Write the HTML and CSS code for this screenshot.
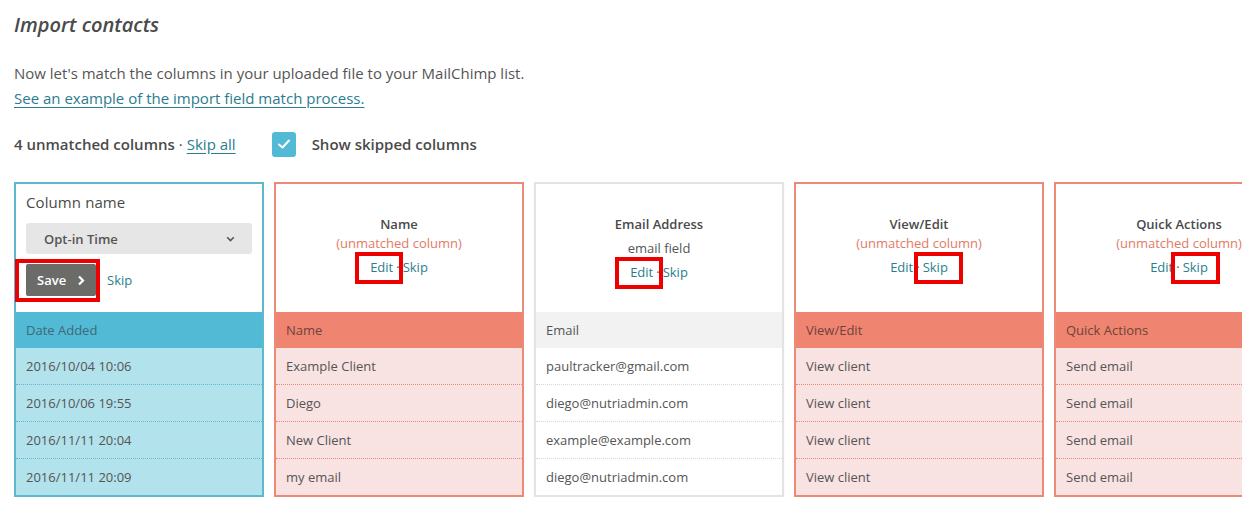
FILE: index.html
```html
<!DOCTYPE html>
<html>
<head>
<meta charset="utf-8">
<link rel="stylesheet" href="styles.css">
</head>
<body>
<div class="page">
  <h1 class="title">Import contacts</h1>
  <p class="intro">Now let's match the columns in your uploaded file to your MailChimp list.<br><a class="link" href="#">See an example of the import field match process.</a></p>
  <div class="toolbar">
    <span class="count">4 unmatched columns</span><span class="dot">·</span><a class="link" href="#">Skip all</a>
    <span class="checkbox"><svg width="14" height="12" viewBox="0 0 14 12"><path d="M2 6.5 L5.5 9.5 L12 2.5" fill="none" stroke="#fff" stroke-width="2" stroke-linecap="round" stroke-linejoin="round"/></svg></span>
    <span class="check-label">Show skipped columns</span>
  </div>

  <div class="columns">
    <div class="card card-blue">
      <div class="card-head head-edit">
        <div class="colname">Column name</div>
        <div class="select"><span>Opt-in Time</span><svg width="9" height="6" viewBox="0 0 9 6"><path d="M1.2 1.2 L4.5 4.5 L7.8 1.2" fill="none" stroke="#555" stroke-width="1.6"/></svg></div>
        <div class="save-row">
          <span class="save mark mark-save">Save<svg width="8" height="11" viewBox="0 0 8 11"><path d="M2 1.5 L6 5.5 L2 9.5" fill="none" stroke="#fff" stroke-width="2.2"/></svg></span>
          <a class="action" href="#">Skip</a>
        </div>
      </div>
      <div class="row row-head">Date Added</div>
      <div class="row">2016/10/04 10:06</div>
      <div class="row">2016/10/06 19:55</div>
      <div class="row">2016/11/11 20:04</div>
      <div class="row">2016/11/11 20:09</div>
    </div>

    <div class="card card-red">
      <div class="card-head">
        <div class="field">Name</div>
        <div class="unmatched">(unmatched column)</div>
        <div class="actions"><a class="action mark mark-left" href="#">Edit</a><span class="sep">·</span><a class="action" href="#">Skip</a></div>
      </div>
      <div class="row row-head">Name</div>
      <div class="row">Example Client</div>
      <div class="row">Diego</div>
      <div class="row">New Client</div>
      <div class="row">my email</div>
    </div>

    <div class="card card-gray">
      <div class="card-head">
        <div class="field">Email Address</div>
        <div class="matched">email field</div>
        <div class="actions actions-matched"><a class="action mark mark-left" href="#">Edit</a><span class="sep">·</span><a class="action" href="#">Skip</a></div>
      </div>
      <div class="row row-head">Email</div>
      <div class="row">paultracker@gmail.com</div>
      <div class="row">diego@nutriadmin.com</div>
      <div class="row">example@example.com</div>
      <div class="row">diego@nutriadmin.com</div>
    </div>

    <div class="card card-red">
      <div class="card-head">
        <div class="field">View/Edit</div>
        <div class="unmatched">(unmatched column)</div>
        <div class="actions"><a class="action" href="#">Edit</a><span class="sep">·</span><a class="action mark mark-right" href="#">Skip</a></div>
      </div>
      <div class="row row-head">View/Edit</div>
      <div class="row">View client</div>
      <div class="row">View client</div>
      <div class="row">View client</div>
      <div class="row">View client</div>
    </div>

    <div class="card card-red">
      <div class="card-head">
        <div class="field">Quick Actions</div>
        <div class="unmatched">(unmatched column)</div>
        <div class="actions"><a class="action" href="#">Edit</a><span class="sep">·</span><a class="action mark mark-mid" href="#">Skip</a></div>
      </div>
      <div class="row row-head">Quick Actions</div>
      <div class="row">Send email</div>
      <div class="row">Send email</div>
      <div class="row">Send email</div>
      <div class="row">Send email</div>
    </div>
  </div>
</div>
</body>
</html>
```

FILE: styles.css
```css
* { box-sizing: border-box; }
html, body { margin: 0; padding: 0; background: #fff; }
body { font-family: "Open Sans", "Liberation Sans", sans-serif; color: #555; }

.page { padding: 0 0 0 14px; }

.title {
  margin: 11px 0 0;
  font-size: 20px;
  line-height: 28px;
  font-style: italic;
  font-weight: 600;
  color: #4a4a4a;
}

.intro {
  margin: 22px 0 0;
  font-size: 15px;
  line-height: 25px;
  color: #555;
}

.link { color: #2a7d8e; text-decoration: underline; text-underline-offset: 3px; }

.toolbar {
  margin-top: 20px;
  height: 26px;
  display: flex;
  align-items: center;
  font-size: 15px;
  color: #4a4a4a;
}
.count { font-weight: 600; }
.dot { margin: 0 4px; }
.checkbox {
  margin-left: 36px;
  width: 24px;
  height: 25px;
  border-radius: 3px;
  background: #52bad5;
  display: flex;
  align-items: center;
  justify-content: center;
}
.check-label { margin-left: 16px; font-weight: 600; font-size: 15px; }

.columns {
  margin-top: 25px;
  width: 1228px;
  display: flex;
  gap: 10px;
  overflow: hidden;
}

.card {
  flex: 0 0 250px;
  width: 250px;
  border: 2px solid;
  background: #fff;
}
.card-blue { border-color: #5db9d0; }
.card-red { border-color: #ec8a77; }
.card-gray { border-color: #e3e3e3; box-shadow: 0 0 2px rgba(0,0,0,0.05); }

.card-head {
  height: 128px;
  padding-top: 30px;
  text-align: center;
  font-size: 13px;
}
.head-edit { text-align: left; padding: 8px 10px 0; }

.colname { font-size: 15px; line-height: 20px; color: #4a4a4a; font-weight: 500; letter-spacing: 0.1px; }
.select {
  margin-top: 11px;
  height: 31px;
  border-radius: 3px;
  background: #e6e6e6;
  display: flex;
  align-items: center;
  justify-content: space-between;
  padding: 0 17px 0 18px;
  font-size: 13px;
  font-weight: 600;
  color: #555;
}
.save-row { margin-top: 10px; display: flex; align-items: center; }
.save-row .action { margin-left: 11px; }

.field { line-height: 20px; font-weight: 600; color: #4a4a4a; }
.unmatched { line-height: 18px; color: #e27a66; }
.matched { margin-top: 4px; line-height: 20px; color: #555; }
.actions { margin-top: 5px; line-height: 20px; }
.actions-matched { margin-top: 4px; }
.action { color: #2a7d8e; text-decoration: none; font-size: 13px; }
.sep { margin: 0 3px; color: #555; }

.mark { position: relative; }
.action.mark { display: inline-block; }
.mark::after {
  content: "";
  position: absolute;
  border: 4px solid #ec0000;
  pointer-events: none;
}
.mark-left::after { top: -5px; bottom: -7px; left: -15px; right: -10px; }
.mark-right::after { top: -5px; bottom: -7px; left: -9px; right: -15px; }
.mark-mid::after { top: -5px; bottom: -7px; left: -12px; right: -12px; }
.mark-save::after { top: -5px; bottom: -6px; left: -11px; right: -4px; }

.save-row .save {
  width: 70px;
  height: 32px;
  border-radius: 2px;
  background: #6b6b6a;
  color: #fff;
  font-size: 13px;
  font-weight: 600;
  display: flex;
  align-items: center;
  padding-left: 11px;
  gap: 11px;
}

.row {
  height: 37px;
  padding: 0 10px;
  display: flex;
  align-items: center;
  font-size: 13px;
  color: #555;
  border-top: 1px dotted;
}
.row-head { height: 36px; border-top: 0; }
.row-head + .row { height: 36px; border-top: 0; }

.card-blue .row { background: #b2e2ec; border-top-color: #5fb8cf; }
.card-blue .row-head { background: #52bad5; color: #3e6977; }
.card-red .row { background: #f9e2e2; border-top-color: #e98a78; }
.card-red .row-head { background: #ef8570; color: #6e433b; }
.card-gray .row { background: #fff; border-top-color: #d8d8d8; }
.card-gray .row-head { background: #f2f2f2; color: #555; }
```
